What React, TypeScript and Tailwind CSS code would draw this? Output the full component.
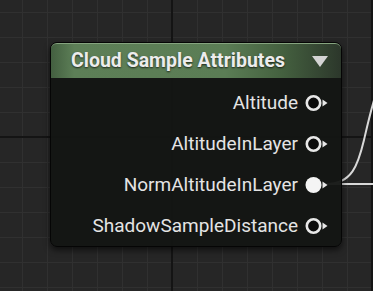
import React from "react";

const pins = [
  { name: "Altitude", linked: false },
  { name: "AltitudeInLayer", linked: false },
  { name: "NormAltitudeInLayer", linked: true },
  { name: "ShadowSampleDistance", linked: false },
];

function Pin({ linked }: { linked: boolean }) {
  return (
    <svg width="24" height="18" viewBox="0 0 24 18" className="shrink-0">
      {linked ? (
        <circle cx="9.5" cy="9" r="8" fill="#f4f4f4" />
      ) : (
        <circle cx="9.5" cy="9" r="6.7" fill="#0c0c0c" stroke="#e8e8e8" strokeWidth="2.6" />
      )}
      <path d="M18.5 5.5 L23.5 9 L18.5 12.5 Z" fill="#e8e8e8" />
    </svg>
  );
}

export default function App() {
  return (
    <div
      className="relative w-[373px] h-[291px] overflow-hidden bg-[#262626] font-['Roboto',sans-serif] [background-image:linear-gradient(to_right,#141414_2px,transparent_2px),linear-gradient(to_bottom,#141414_2px,transparent_2px),linear-gradient(to_right,#303030_1px,transparent_1px),linear-gradient(to_bottom,#303030_1px,transparent_1px)] [background-size:200px_200px,200px_200px,25px_25px,25px_25px] [background-position:171px_136px,171px_136px,22px_12px,22px_12px]"
    >
      {/* wires */}
      <svg className="absolute inset-0" width="373" height="291">
        <path d="M326 184 L373 184" stroke="#d9d9d9" strokeWidth="2" fill="none" />
        <path
          d="M326 184 C352 184 358 165 364 140 C369 118 374 95 384 70"
          stroke="#d9d9d9"
          strokeWidth="2"
          fill="none"
        />
      </svg>

      {/* node */}
      <div className="absolute left-[50px] top-[42px] w-[292px] h-[205px] rounded-[7px] border border-[#050505] bg-[#131513]/95 shadow-[0_3px_6px_rgba(0,0,0,0.6)] flex flex-col">
        <div className="h-[35px] shrink-0 rounded-t-[6px] border-t border-[#86a47f] bg-[linear-gradient(to_right,#435f40_0%,#5d7f57_8%,#5b7d55_60%,#44603f_80%,#2c372b_100%)] flex items-center justify-between pl-[20px] pr-[12px]">
          <span className="text-[19.5px] font-bold text-[#ececec] [text-shadow:0_1px_2px_rgba(0,0,0,0.7)] leading-none">
            Cloud Sample Attributes
          </span>
          <svg width="18" height="13" viewBox="0 0 18 13">
            <path d="M1 1 L17 1 L9 12 Z" fill="#d4d4d4" />
          </svg>
        </div>
        <div className="flex flex-col pt-[4px] pr-[13px]">
          {pins.map((p) => (
            <div key={p.name} className="h-[41px] flex items-center justify-end gap-[6px]">
              <span className="text-[19px] text-[#e4e4e4] leading-none">{p.name}</span>
              <Pin linked={p.linked} />
            </div>
          ))}
        </div>
      </div>
    </div>
  );
}
